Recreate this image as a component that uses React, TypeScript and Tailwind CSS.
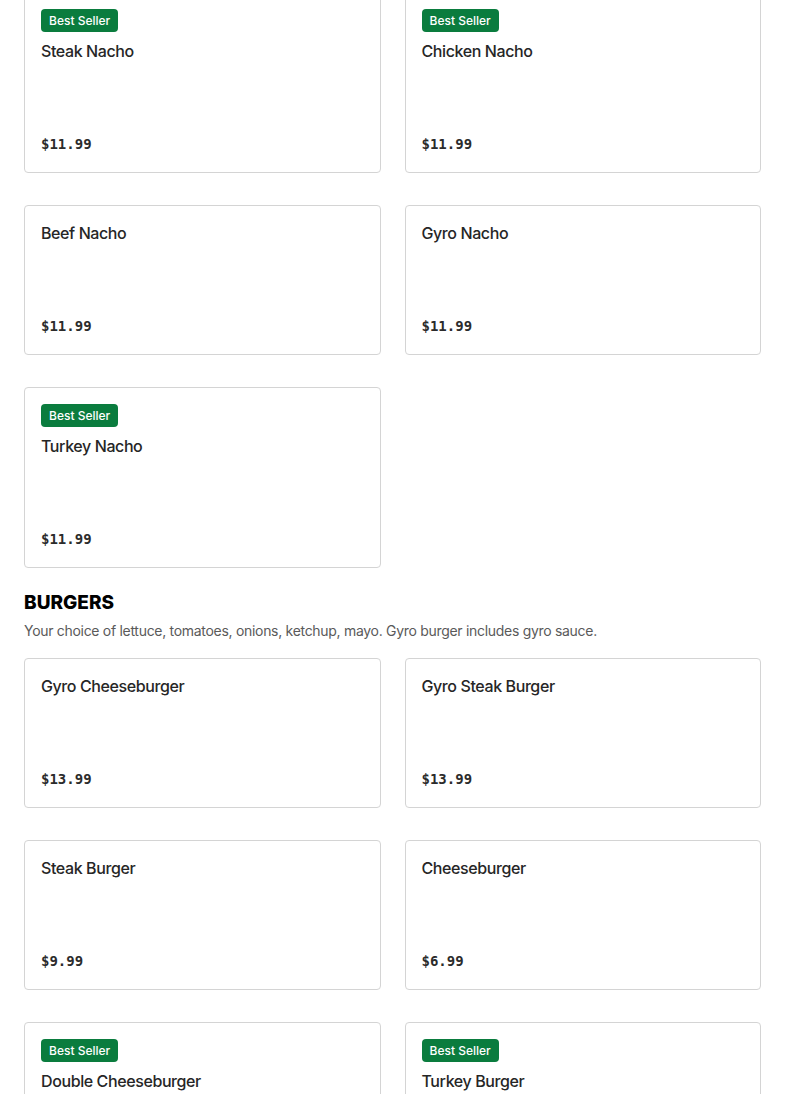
import React from "react";

type Item = { name: string; price: string; best?: boolean };

const nachos: Item[] = [
  { name: "Steak Nacho", price: "$11.99", best: true },
  { name: "Chicken Nacho", price: "$11.99", best: true },
  { name: "Beef Nacho", price: "$11.99" },
  { name: "Gyro Nacho", price: "$11.99" },
  { name: "Turkey Nacho", price: "$11.99", best: true },
];

const burgers: Item[] = [
  { name: "Gyro Cheeseburger", price: "$13.99" },
  { name: "Gyro Steak Burger", price: "$13.99" },
  { name: "Steak Burger", price: "$9.99" },
  { name: "Cheeseburger", price: "$6.99" },
  { name: "Double Cheeseburger", price: "$11.99", best: true },
  { name: "Turkey Burger", price: "$11.99", best: true },
];

function Card({ item }: { item: Item }) {
  return (
    <div className="flex flex-col rounded-[4px] border border-[#d4d4d4] bg-white px-4 pt-4 pb-[18px]">
      {item.best && (
        <div className="mb-2 self-start rounded-[4px] bg-[#0a7c3e] px-2 text-[12px] leading-[23px] font-medium text-white">
          Best Seller
        </div>
      )}
      <div className="text-[16px] leading-[23px] font-medium tracking-[-0.4px] text-[#262626]">{item.name}</div>
      <div className="h-[71px]" />
      <div className="font-['DejaVu_Sans_Mono',monospace] text-[14px] leading-[20px] font-bold text-[#2b2b2b]">
        {item.price}
      </div>
    </div>
  );
}

export default function App() {
  return (
    <div className="min-h-screen bg-white font-['Inter',sans-serif] px-6 overflow-hidden">
      <div className="-mt-2 grid grid-cols-2 gap-x-6 gap-y-8 items-start">
        {nachos.map((it) => (
          <Card key={it.name} item={it} />
        ))}
      </div>
      <div className="mt-[21px] text-[19px] leading-[28px] font-extrabold text-black">BURGERS</div>
      <div className="mt-1 text-[14px] leading-[20px] tracking-[-0.3px] text-[#5a5a5a]">
        Your choice of lettuce, tomatoes, onions, ketchup, mayo. Gyro burger includes gyro sauce.
      </div>
      <div className="mt-[17px] grid grid-cols-2 gap-x-6 gap-y-8 items-start">
        {burgers.map((it) => (
          <Card key={it.name} item={it} />
        ))}
      </div>
    </div>
  );
}
